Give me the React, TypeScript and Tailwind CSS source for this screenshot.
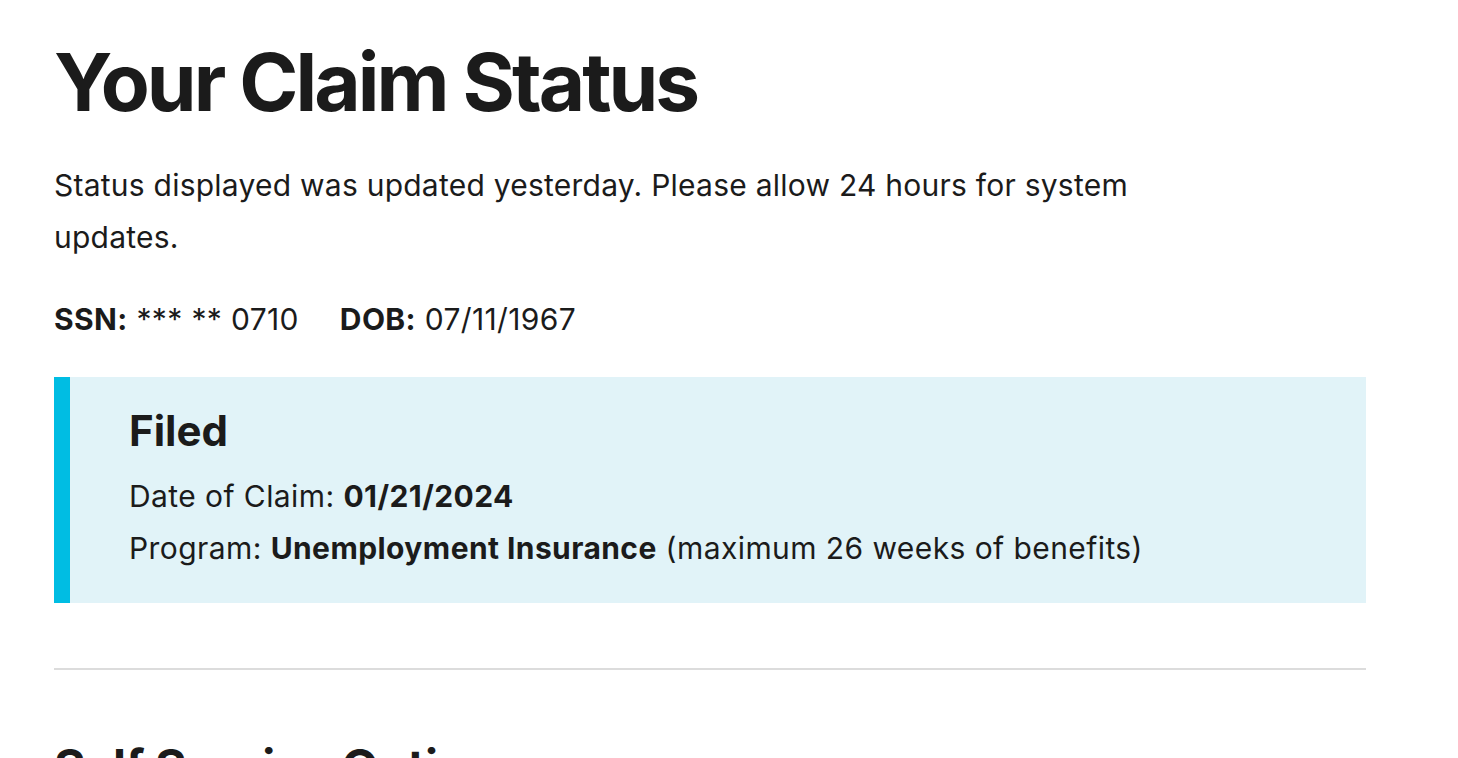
import React from "react";

export default function App() {
  return (
    <div
      className="min-h-screen bg-white text-[#1b1b1b]"
      style={{ fontFamily: "Inter, 'Noto Sans', 'Liberation Sans', sans-serif" }}
    >
      <main className="w-[1312px] ml-[54px] pt-[34px]">
        <h1 className="text-[80px] leading-[96px] font-bold tracking-[-0.037em]">
          Your Claim Status
        </h1>
        <p className="mt-[29px] text-[30px] leading-[52px] tracking-[0.008em] max-w-[1150px]">
          Status displayed was updated yesterday. Please allow 24 hours for system updates.
        </p>
        <div className="mt-[30px] flex gap-[41px] text-[30px] leading-[52px] tracking-[0.012em]">
          <span>
            <strong className="font-bold">SSN:</strong> *** ** 0710
          </span>
          <span>
            <strong className="font-bold">DOB:</strong> 07/11/1967
          </span>
        </div>
        <section className="mt-[32px] border-l-[16px] border-[#00bde3] bg-[#e1f3f8] pl-[59px] pt-[29px] pb-[29px]">
          <h3 className="text-[42px] leading-[50px] font-bold">Filed</h3>
          <div className="mt-[14px] text-[30px] leading-[52px] tracking-[0.014em]">
            <div>
              Date of Claim: <strong className="font-bold">01/21/2024</strong>
            </div>
            <div>
              Program: <strong className="font-bold">Unemployment Insurance</strong> (maximum 26 weeks of benefits)
            </div>
          </div>
        </section>
        <hr className="mt-[65px] h-0 border-0 border-t-2 border-[#dcdcdc]" />
        <h2 className="mt-[68px] text-[48px] leading-[58px] font-bold tracking-[-0.01em]">
          Self Service Options
        </h2>
      </main>
    </div>
  );
}
